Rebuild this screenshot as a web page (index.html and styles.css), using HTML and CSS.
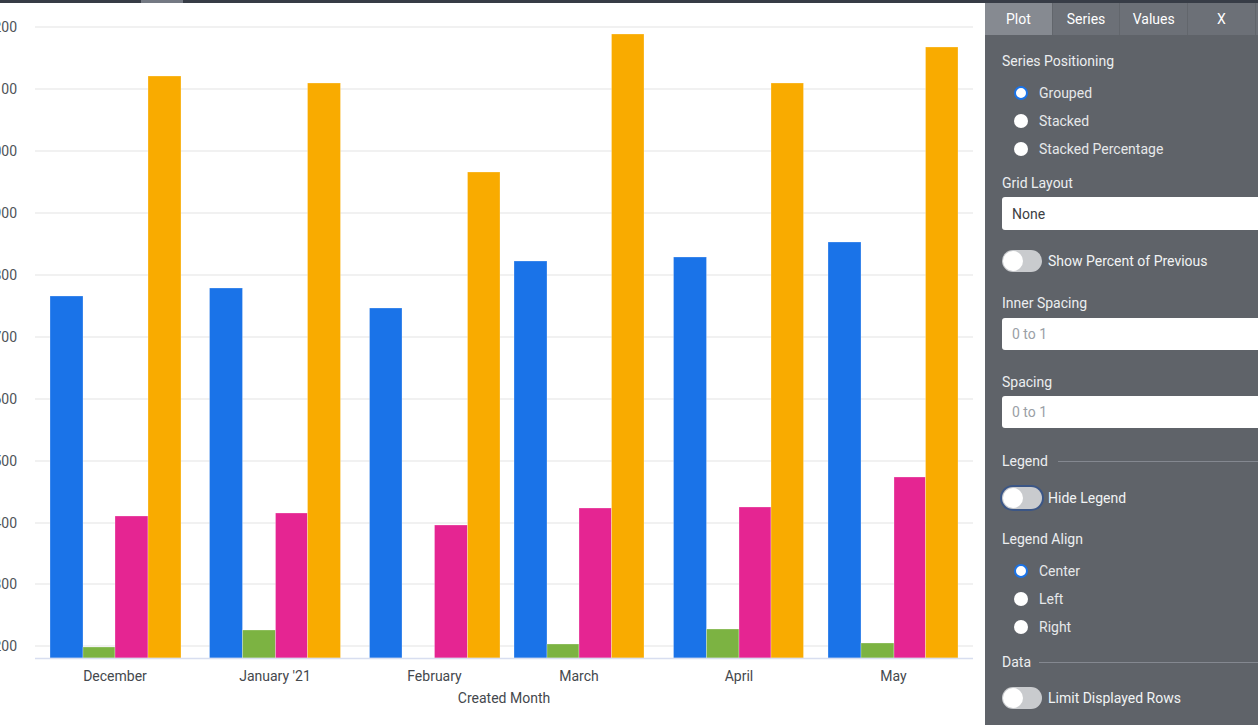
FILE: index.html
```html
<!DOCTYPE html>
<html lang="en">
<head>
<meta charset="utf-8">
<title>Chart editor</title>
<link rel="stylesheet" href="styles.css">
</head>
<body>
<div class="topbar"><div class="topbar-seg"></div></div>
<div class="app">
  <main class="chart">
    <svg class="chart-svg" width="985" height="722" viewBox="0 3 985 722" xmlns="http://www.w3.org/2000/svg">
      <g class="grid">
        <line x1="35" x2="973" y1="27" y2="27"/>
        <line x1="35" x2="973" y1="89" y2="89"/>
        <line x1="35" x2="973" y1="151" y2="151"/>
        <line x1="35" x2="973" y1="213" y2="213"/>
        <line x1="35" x2="973" y1="275" y2="275"/>
        <line x1="35" x2="973" y1="337" y2="337"/>
        <line x1="35" x2="973" y1="399" y2="399"/>
        <line x1="35" x2="973" y1="461" y2="461"/>
        <line x1="35" x2="973" y1="523" y2="523"/>
        <line x1="35" x2="973" y1="584" y2="584"/>
        <line x1="35" x2="973" y1="646" y2="646"/>
      </g>
      <g class="ytick">
        <text x="17" y="27">1,200</text>
        <text x="17" y="89">1,100</text>
        <text x="17" y="151">1,000</text>
        <text x="17" y="213">900</text>
        <text x="17" y="275">800</text>
        <text x="17" y="337">700</text>
        <text x="17" y="399">600</text>
        <text x="17" y="461">500</text>
        <text x="17" y="523">400</text>
        <text x="17" y="584">300</text>
        <text x="17" y="646">200</text>
      </g>
      <g class="bars">
        <rect class="b-blue" x="50" y="296" width="33" height="362"/>
        <rect class="b-green" x="83" y="647" width="32" height="11"/>
        <rect class="b-pink" x="115" y="516" width="33" height="142"/>
        <rect class="b-orange" x="148" y="76" width="33" height="582"/>

        <rect class="b-blue" x="209.5" y="288" width="33" height="370"/>
        <rect class="b-green" x="242.5" y="630" width="33" height="28"/>
        <rect class="b-pink" x="275.5" y="513" width="32" height="145"/>
        <rect class="b-orange" x="307.5" y="83" width="33" height="575"/>

        <rect class="b-blue" x="369.5" y="308" width="32.5" height="350"/>
        <rect class="b-pink" x="434.5" y="525" width="33" height="133"/>
        <rect class="b-orange" x="467.5" y="172" width="32.5" height="486"/>

        <rect class="b-blue" x="514" y="261" width="33" height="397"/>
        <rect class="b-green" x="547" y="644" width="32" height="14"/>
        <rect class="b-pink" x="579" y="508" width="32.5" height="150"/>
        <rect class="b-orange" x="611.5" y="34" width="32.5" height="624"/>

        <rect class="b-blue" x="673.5" y="257" width="33" height="401"/>
        <rect class="b-green" x="706.5" y="629" width="32.5" height="29"/>
        <rect class="b-pink" x="739" y="507" width="32" height="151"/>
        <rect class="b-orange" x="771" y="83" width="32.5" height="575"/>

        <rect class="b-blue" x="828" y="242" width="33" height="416"/>
        <rect class="b-green" x="861" y="643" width="33" height="15"/>
        <rect class="b-pink" x="894" y="477" width="31.5" height="181"/>
        <rect class="b-orange" x="925.5" y="47" width="32.5" height="611"/>
      </g>
      <line class="xaxis" x1="35" x2="973" y1="658.5" y2="658.5"/>
      <g class="xtick">
        <text x="115" y="681">December</text>
        <text x="275" y="681">January '21</text>
        <text x="434.5" y="681">February</text>
        <text x="579" y="681">March</text>
        <text x="739" y="681">April</text>
        <text x="893.5" y="681">May</text>
      </g>
      <text class="xtitle" x="504" y="702.5">Created Month</text>
    </svg>
  </main>

  <aside class="panel">
    <nav class="tabs">
      <div class="tab tab-active">Plot</div>
      <div class="tab">Series</div>
      <div class="tab">Values</div>
      <div class="tab">X</div>
      <div class="tab tab-stub"></div>
    </nav>

    <div class="panel-body">
      <div class="label sp-top">Series Positioning</div>
      <div class="radio-group">
        <div class="radio-row"><span class="radio radio-on"></span><span>Grouped</span></div>
        <div class="radio-row"><span class="radio"></span><span>Stacked</span></div>
        <div class="radio-row"><span class="radio"></span><span>Stacked Percentage</span></div>
      </div>

      <div class="label sp-grid">Grid Layout</div>
      <div class="field field-select">None</div>

      <div class="toggle-row sp-toggle1"><span class="toggle"><span class="knob"></span></span><span class="toggle-label">Show Percent of Previous</span></div>

      <div class="label sp-inner">Inner Spacing</div>
      <div class="field field-input">0 to 1</div>

      <div class="label sp-spacing">Spacing</div>
      <div class="field field-input field-2">0 to 1</div>

      <div class="section sp-legend"><span>Legend</span><span class="rule"></span></div>
      <div class="toggle-row sp-toggle2"><span class="toggle toggle-focus"><span class="knob"></span></span><span class="toggle-label">Hide Legend</span></div>

      <div class="label sp-align">Legend Align</div>
      <div class="radio-group">
        <div class="radio-row"><span class="radio radio-on"></span><span>Center</span></div>
        <div class="radio-row"><span class="radio"></span><span>Left</span></div>
        <div class="radio-row"><span class="radio"></span><span>Right</span></div>
      </div>

      <div class="section section-data"><span>Data</span><span class="rule"></span></div>
      <div class="toggle-row sp-toggle3"><span class="toggle"><span class="knob"></span></span><span class="toggle-label">Limit Displayed Rows</span></div>
    </div>
  </aside>
</div>
</body>
</html>
```

FILE: styles.css
```css
* { box-sizing: border-box; }

html, body {
  margin: 0;
  padding: 0;
  width: 1258px;
  height: 725px;
  overflow: hidden;
  background: #ffffff;
  font-family: Roboto, "Liberation Sans", Arial, sans-serif;
}

.topbar {
  height: 3px;
  background: #373c46;
  display: flex;
}

.topbar-seg {
  margin-left: 141px;
  width: 42px;
  height: 3px;
  background: #747983;
}

.app {
  display: flex;
  height: 722px;
}

.chart {
  width: 985px;
  flex: none;
  background: #ffffff;
}

.chart-svg { display: block; }

.grid line {
  stroke: #ececec;
  stroke-width: 1.5;
}

.xaxis {
  stroke: #d8def0;
  stroke-width: 1.5;
}

.ytick text {
  font-size: 14px;
  fill: #505459;
  text-anchor: end;
  dominant-baseline: central;
}

.xtick text,
.xtitle {
  font-size: 14px;
  fill: #44484d;
  text-anchor: middle;
}

.bars rect {
  stroke: rgba(255, 255, 255, 0.45);
  stroke-width: 0.6;
}

.b-blue { fill: #1a73e8; }
.b-green { fill: #7cb342; }
.b-pink { fill: #e52592; }
.b-orange { fill: #f9ab00; }

/* ---------- Panel ---------- */
.panel {
  width: 273px;
  flex: none;
  background: #5f6369;
  overflow: hidden;
  color: #eceef0;
  font-size: 14px;
}

.tabs {
  display: flex;
  height: 32px;
}

.tab {
  width: 67.7px;
  flex: none;
  height: 32px;
  line-height: 32px;
  text-align: center;
  color: #ffffff;
  background: #6c7077;
  border-right: 1px solid #62666c;
  font-size: 14px;
}

.tab-active { background: #868a91; }
.tab-stub { width: 20px; }

.panel-body {
  padding-left: 17px;
  width: 320px;
}

.label {
  height: 20px;
  line-height: 20px;
}

.sp-top { margin-top: 16px; }
.sp-grid { margin-top: 10px; }
.sp-inner { margin-top: 21px; }
.sp-spacing { margin-top: 22px; }
.sp-align { margin-top: 20px; }

.radio-group { margin-top: 8px; }

.radio-row {
  height: 28px;
  display: flex;
  align-items: center;
  padding-left: 12px;
  gap: 11px;
  color: #e6e8ea;
}

.radio {
  width: 14px;
  height: 14px;
  border-radius: 50%;
  background: #ffffff;
  flex: none;
}

.radio-on {
  border: 2.5px solid #1a73e8;
}

.field {
  width: 300px;
  border-radius: 3px;
  background: #ffffff;
  padding-left: 10px;
  display: flex;
  align-items: center;
}

.field-select {
  margin-top: 4px;
  height: 33px;
  color: #3c4043;
}

.field-input {
  margin-top: 5px;
  height: 32px;
  color: #9aa0a6;
}

.field-2 { margin-top: 4px; }

.toggle-row {
  display: flex;
  align-items: center;
  height: 22px;
}

.sp-toggle1 { margin-top: 20px; }
.sp-toggle2 { margin-top: 16px; }
.sp-toggle3 { margin-top: 15px; }

.toggle {
  width: 40px;
  height: 22px;
  border-radius: 11px;
  background: #c9cbce;
  display: flex;
  align-items: center;
  padding-left: 1px;
  flex: none;
}

.toggle-focus {
  box-shadow: 0 0 0 2px #3b5686;
}

.knob {
  width: 20px;
  height: 20px;
  border-radius: 50%;
  background: #ffffff;
}

.toggle-label {
  margin-left: 6px;
  color: #f1f3f4;
}

.section {
  display: flex;
  align-items: center;
  gap: 10px;
  height: 20px;
}

.sp-legend { margin-top: 23px; }
.section-data { margin-top: 11px; gap: 8px; }

.rule {
  flex: 1;
  height: 1px;
  background: #848890;
}
```
